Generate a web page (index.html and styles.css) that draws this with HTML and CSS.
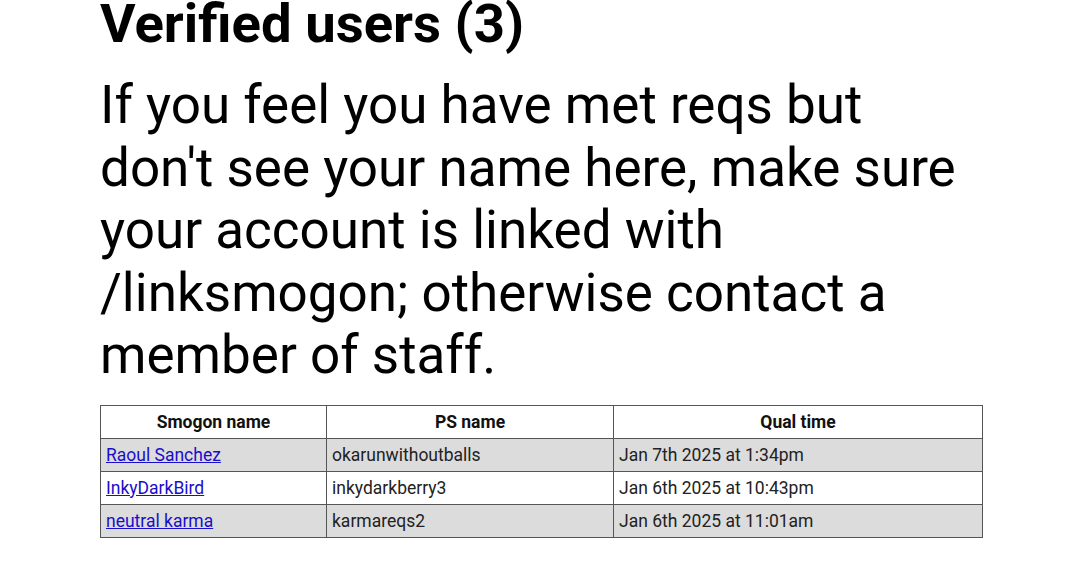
FILE: index.html
```html
<!DOCTYPE html>
<html>
<head>
<meta charset="utf-8">
<link rel="stylesheet" href="styles.css">
</head>
<body>
<main class="page">
  <h1 class="title">Verified users (3)</h1>
  <p class="note">If you feel you have met reqs but don't see your name here, make sure your account is linked with /linksmogon; otherwise contact a member of staff.</p>
  <table class="users">
    <thead>
      <tr><th class="c1">Smogon name</th><th class="c2">PS name</th><th class="c3">Qual time</th></tr>
    </thead>
    <tbody>
      <tr class="odd"><td><a href="#">Raoul Sanchez</a></td><td>okarunwithoutballs</td><td>Jan 7th 2025 at 1:34pm</td></tr>
      <tr><td><a href="#">InkyDarkBird</a></td><td>inkydarkberry3</td><td>Jan 6th 2025 at 10:43pm</td></tr>
      <tr class="odd"><td><a href="#">neutral karma</a></td><td>karmareqs2</td><td>Jan 6th 2025 at 11:01am</td></tr>
    </tbody>
  </table>
</main>
</body>
</html>
```

FILE: styles.css
```css
html, body { margin: 0; padding: 0; background: #fff; }
body { font-family: Roboto, "Liberation Sans", sans-serif; color: #000; }
.page { padding: 0 97px 0 100px; }
.title { margin: 0; font-size: 54.5px; font-weight: 700; line-height: 46px; }
.note { margin: 28px 0 18px; font-size: 53px; line-height: 62.5px; font-weight: 400; width: 870px; }
.users { border-collapse: collapse; width: 883px; font-size: 17.5px; }
.users th, .users td { border: 1px solid #555; height: 32px; padding: 0 5px; color: #222; }
.users th { font-weight: 700; text-align: center; color: #111; }
.users td { text-align: left; }
.users .c1 { width: 215px; }
.users .c2 { width: 276px; }
.users tr.odd td { background: #dcdcdc; }
.users a { color: #1a0dcc; text-decoration: underline; }
```
